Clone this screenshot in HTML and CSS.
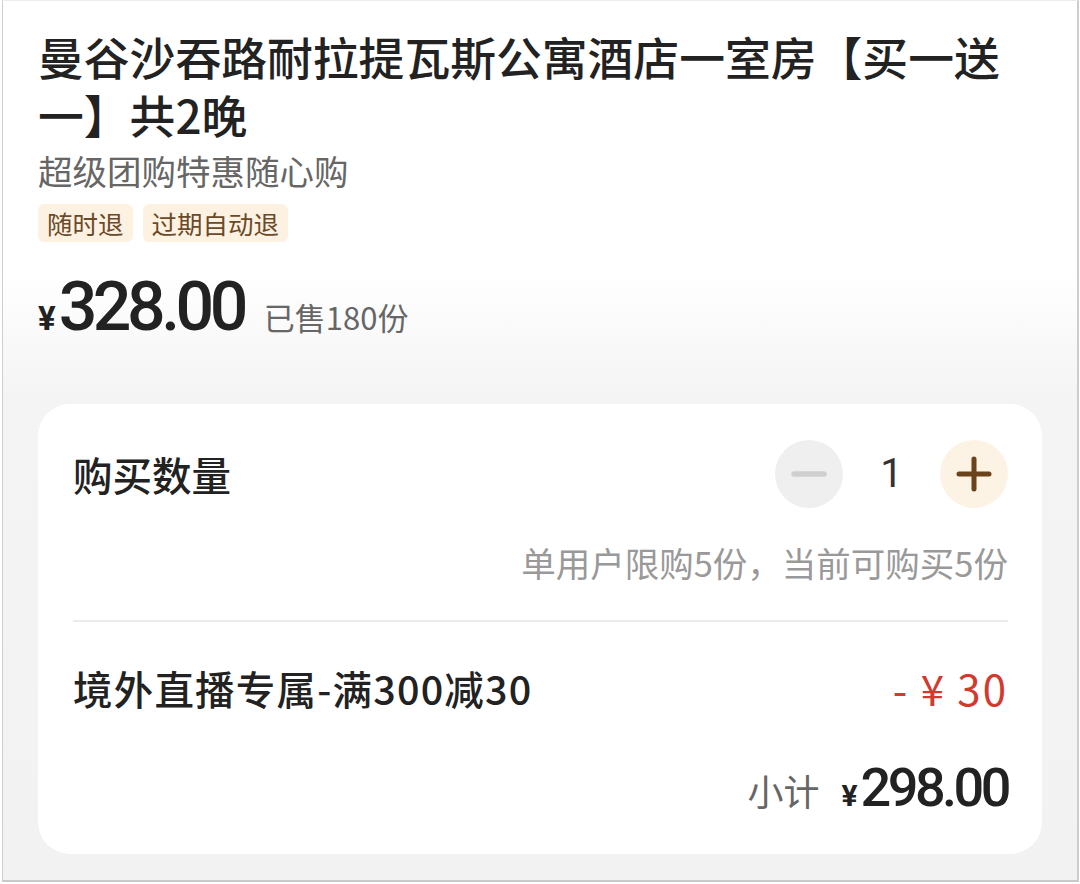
FILE: index.html
```html
<!DOCTYPE html>
<html lang="zh-CN">
<head>
<meta charset="utf-8">
<title>团购详情</title>
<link rel="stylesheet" href="styles.css">
</head>
<body>
<div class="frame">
  <div class="header">
    <h1 class="title">曼谷沙吞路耐拉提瓦斯公寓酒店一室房【买一送一】共2晚</h1>
    <div class="subtitle">超级团购特惠随心购</div>
    <div class="tags">
      <span class="tag">随时退</span>
      <span class="tag">过期自动退</span>
    </div>
    <div class="price-row">
      <span class="yen">¥</span><span class="price">328.00</span>
      <span class="sold">已售180份</span>
    </div>
  </div>
  <div class="card">
    <div class="qty-row">
      <span class="label">购买数量</span>
      <div class="stepper">
        <span class="btn btn-minus">
          <svg width="36" height="6" viewBox="0 0 36 6"><line x1="3" y1="3" x2="33" y2="3" stroke="#cfcfcf" stroke-width="5.5" stroke-linecap="round"/></svg>
        </span>
        <span class="num">1</span>
        <span class="btn btn-plus">
          <svg width="36" height="36" viewBox="0 0 36 36"><path d="M3 18H33M18 3V33" stroke="#6b4219" stroke-width="5" stroke-linecap="round" fill="none"/></svg>
        </span>
      </div>
    </div>
    <div class="hint">单用户限购5份，当前可购买5份</div>
    <div class="divider"></div>
    <div class="promo-row">
      <span class="label promo">境外直播专属-满300减30</span>
      <span class="discount">- ¥ 30</span>
    </div>
    <div class="subtotal-row">
      <span class="sub-label">小计</span>
      <span class="sub-yen">¥</span><span class="sub-price">298.00</span>
    </div>
  </div>
</div>
</body>
</html>
```

FILE: styles.css
```css
html, body {
  margin: 0;
  padding: 0;
  background: #ffffff;
}
body {
  font-family: "Noto Sans CJK SC", "Noto Sans", sans-serif;
  color: #222222;
  width: 1080px;
  height: 884px;
  overflow: hidden;
}
.frame {
  box-sizing: border-box;
  margin: 0 1px 0 2px;
  width: 1077px;
  height: 882px;
  border-top: 1px solid #ececec;
  border-left: 1px solid #cfcfcf;
  border-right: 2px solid #cdcdcd;
  border-bottom: 2px solid #c9c9c9;
  background: linear-gradient(#ffffff 0, #ffffff 270px, #f4f4f4 400px, #f2f2f2 100%);
  padding: 0 35px;
}
.header {
  padding-top: 26px;
}
.title {
  margin: 0;
  font-size: 45.8px;
  line-height: 58px;
  font-weight: 500;
  color: #222222;
}
.subtitle {
  font-size: 34.5px;
  line-height: 54px;
  color: #666666;
}
.tags {
  display: flex;
  gap: 10px;
  margin-top: 7px;
}
.tag {
  height: 38px;
  line-height: 38px;
  padding: 0 9px;
  font-size: 25.5px;
  color: #6b4a29;
  background: #fdf2e2;
  border-radius: 6px;
}
.price-row {
  display: flex;
  align-items: baseline;
  margin-top: 29px;
  height: 72px;
}
.yen {
  font-family: Roboto, "Noto Sans", sans-serif;
  font-weight: 700;
  font-size: 33px;
  color: #222222;
  margin-right: 3px;
}
.price {
  font-family: Roboto, "Noto Sans", sans-serif;
  font-weight: 500;
  font-size: 68px;
  letter-spacing: -4.5px;
  color: #222222;
  line-height: 72px;
}
.sold {
  margin-left: 20px;
  font-size: 31px;
  color: #666666;
}
.card {
  margin-top: 61px;
  background: #ffffff;
  border-radius: 32px;
  padding: 35px 34px 36px 35px;
}
.qty-row {
  display: flex;
  align-items: center;
  justify-content: space-between;
  height: 69px;
}
.label {
  font-size: 39.5px;
  font-weight: 500;
  color: #222222;
}
.promo {
  letter-spacing: 1.2px;
}
.stepper {
  display: flex;
  align-items: center;
}
.btn {
  width: 68px;
  height: 68px;
  border-radius: 50%;
  display: flex;
  align-items: center;
  justify-content: center;
}
.btn-minus {
  background: #efefef;
}
.btn-plus {
  background: #fdf3e4;
}
.num {
  width: 97px;
  text-align: center;
  font-family: Roboto, sans-serif;
  font-size: 40px;
  color: #333333;
}
.hint {
  margin-top: 34px;
  text-align: right;
  font-size: 34.5px;
  line-height: 40px;
  color: #999999;
}
.divider {
  margin-top: 38px;
  height: 2px;
  background: #ebebeb;
}
.promo-row {
  display: flex;
  align-items: center;
  justify-content: space-between;
  margin-top: 41px;
  height: 48px;
}
.discount {
  font-size: 42px;
  color: #d23a2e;
  font-family: "Noto Sans CJK SC", sans-serif;
  letter-spacing: 2px;
  white-space: pre;
}
.subtotal-row {
  display: flex;
  justify-content: flex-end;
  align-items: baseline;
  margin-top: 47px;
  height: 60px;
  line-height: 60px;
}
.sub-label {
  font-size: 36px;
  color: #666666;
  margin-right: 22px;
}
.sub-yen {
  font-family: Roboto, sans-serif;
  font-weight: 700;
  font-size: 30px;
  margin-right: 3px;
  color: #222222;
}
.sub-price {
  font-family: Roboto, sans-serif;
  font-weight: 500;
  font-size: 54px;
  letter-spacing: -3.5px;
  color: #222222;
}
```
